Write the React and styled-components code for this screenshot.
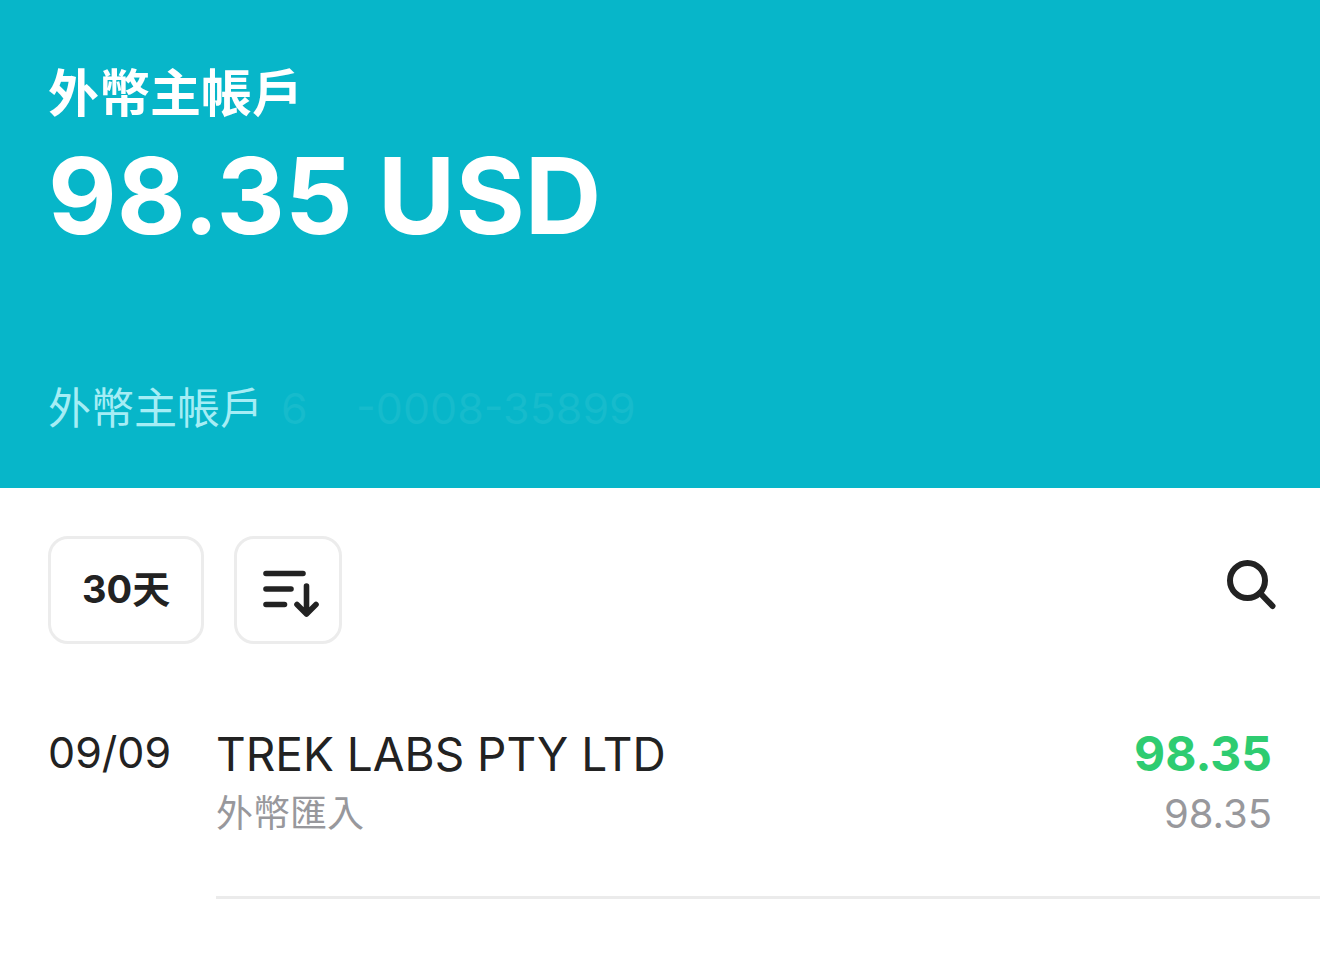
import React, { useState } from 'react'
import styled, { createGlobalStyle } from 'styled-components'

const transactions = [
  {
    id: 1,
    date: '09/09',
    name: 'TREK LABS PTY LTD',
    type: '外幣匯入',
    amount: '98.35',
    balance: '98.35'
  }
]

const GlobalStyle = createGlobalStyle`
  * {
    box-sizing: border-box;
  }

  body {
    margin: 0;
    background-color: #fff;
    color: #222;
    font-family: Inter, 'Noto Sans CJK TC', sans-serif;
  }

  h1, p {
    margin: 0;
  }
`

const AccountHeader = styled.header`
  display: flex;
  flex-direction: column;
  padding: 62px 48px 48px;
  background-color: #07b6c9;
  color: #fff;
`

const AccountName = styled.h1`
  font-size: 51px;
  font-weight: 700;
  line-height: 64px;
`

const Balance = styled.p`
  margin-top: 6px;
  font-size: 106px;
  font-weight: 700;
  line-height: 128px;
`

const AccountInfo = styled.p`
  display: flex;
  gap: 18px;
  margin-top: 116px;
  font-size: 43px;
  line-height: 64px;
  color: #a5edf5;
`

const AccountNumber = styled.span`
  color: #16bbcc;
  white-space: pre;
`

const Toolbar = styled.div`
  display: flex;
  align-items: center;
  gap: 30px;
  padding: 48px 40px 48px 48px;
`

const FilterButton = styled.button`
  display: flex;
  align-items: center;
  justify-content: center;
  min-width: 108px;
  height: 108px;
  padding: ${props => props.$icon ? '0' : '0 31px 8px'};
  border: 3px solid #ececec;
  border-radius: 20px;
  background-color: #fff;
  color: #222;
  font-family: inherit;
  font-size: 38px;
  font-weight: 700;
  cursor: pointer;
`

const SearchButton = styled.button`
  display: flex;
  margin-left: auto;
  padding: 0;
  border: none;
  background: none;
  color: #222;
  cursor: pointer;
`

const TransactionList = styled.ul`
  margin: 0;
  padding: 0 0 0 48px;
  list-style: none;
`

const Transaction = styled.li`
  display: grid;
  grid-template-columns: 168px 1fr;
`

const TransactionDate = styled.time`
  padding-top: 28px;
  font-size: 43px;
  line-height: 64px;
`

const TransactionBody = styled.div`
  display: flex;
  justify-content: space-between;
  padding: 30px 48px 54px 0;
  border-bottom: 3px solid #ebebeb;
`

const Column = styled.div`
  text-align: ${props => props.$end ? 'right' : 'left'};
`

const Primary = styled.p`
  font-size: ${props => props.$income ? '48px' : '46px'};
  line-height: 64px;
  font-weight: ${props => props.$income ? 700 : 400};
  color: ${props => props.$income ? '#2ecc71' : '#222'};
`

const Secondary = styled.p`
  font-size: ${props => props.$number ? '40px' : '37px'};
  line-height: 56px;
  color: #98989c;
`

const SortIcon = () => (
  <svg width="64" height="60" viewBox="-2 0 64 60" fill="none" stroke="currentColor" strokeWidth="5.6" strokeLinecap="round" strokeLinejoin="round" aria-hidden="true">
    <path d="M8 13.5h37M8 29h25M8 44.5h18.5" />
    <path d="M48.5 26v28M39 44.5l9.500 9.500 9.500-9.500" />
  </svg>
)

const SearchIcon = () => (
  <svg width="60" height="60" viewBox="0 0 60 60" fill="none" stroke="currentColor" strokeWidth="6" strokeLinecap="round" aria-hidden="true">
    <circle cx="27.5" cy="20.5" r="17.5" />
    <path d="M40 33l12.5 13" />
  </svg>
)

const App = () => {
  const [descending, setDescending] = useState(true)

  return (
    <>
      <GlobalStyle />
      <AccountHeader>
        <AccountName>外幣主帳戶</AccountName>
        <Balance>98.35 USD</Balance>
        <AccountInfo>
          外幣主帳戶
          <AccountNumber>6    -0008-35899</AccountNumber>
        </AccountInfo>
      </AccountHeader>
      <main>
        <Toolbar>
          <FilterButton type="button">30天</FilterButton>
          <FilterButton type="button" $icon aria-label="排序" onClick={() => setDescending(!descending)}>
            <SortIcon />
          </FilterButton>
          <SearchButton type="button" aria-label="搜尋">
            <SearchIcon />
          </SearchButton>
        </Toolbar>
        <TransactionList>
          {transactions.map(t => (
            <Transaction key={t.id}>
              <TransactionDate>{t.date}</TransactionDate>
              <TransactionBody>
                <Column>
                  <Primary>{t.name}</Primary>
                  <Secondary>{t.type}</Secondary>
                </Column>
                <Column $end>
                  <Primary $income>{t.amount}</Primary>
                  <Secondary $number>{t.balance}</Secondary>
                </Column>
              </TransactionBody>
            </Transaction>
          ))}
        </TransactionList>
      </main>
    </>
  )
}

export default App
